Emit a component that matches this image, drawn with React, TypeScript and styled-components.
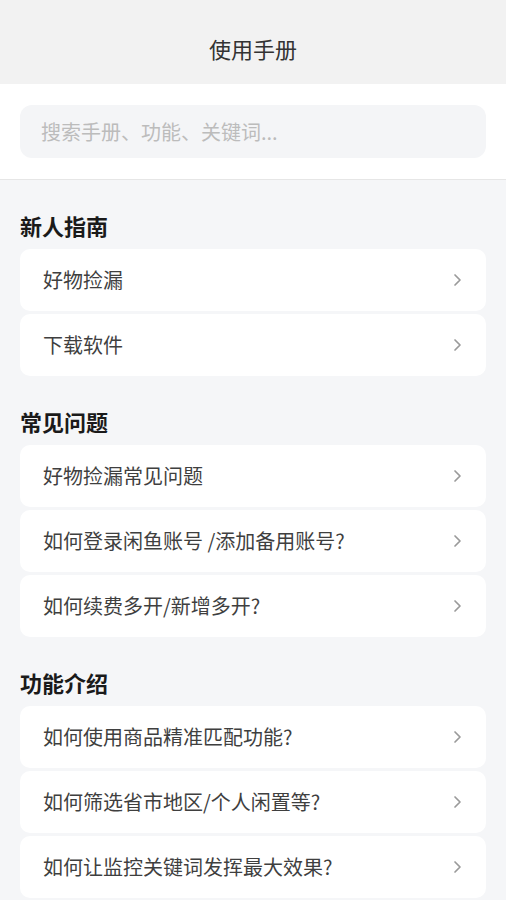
import React from 'react';
import styled, { createGlobalStyle } from 'styled-components';

const GlobalStyle = createGlobalStyle`
  html, body {
    margin: 0;
    padding: 0;
    background: #f5f6f8;
    font-family: "Noto Sans CJK SC", "Noto Sans", sans-serif;
  }
`;

const Page = styled.div`
  width: 506px;
  min-height: 900px;
  background: #f5f6f8;
`;

const Header = styled.div`
  height: 84px;
  background: #f2f2f2;
  display: flex;
  align-items: center;
  justify-content: center;
  padding-top: 12px;
  box-sizing: border-box;
  font-size: 22px;
  line-height: 28px;
  color: #333;
`;

const SearchBar = styled.div`
  background: #fff;
  padding: 21px 20px;
  border-bottom: 1px solid #e6e6e6;
`;

const SearchBox = styled.div`
  height: 53px;
  border-radius: 12px;
  background: #f4f5f7;
  display: flex;
  align-items: center;
  padding: 0 21px;
  font-size: 20px;
  color: #bcbcbc;
`;

const Section = styled.div`
  padding: 0 20px;
`;

const SectionTitle = styled.div`
  padding-top: 31.5px;
  height: 26px;
  line-height: 26px;
  margin-bottom: 11px;
  font-size: 22px;
  font-weight: 700;
  color: #1a1a1a;
`;

const List = styled.div`
  display: flex;
  flex-direction: column;
  gap: 2.5px;
`;

const Item = styled.div`
  height: 62.5px;
  background: #fff;
  border-radius: 10px;
  display: flex;
  align-items: center;
  justify-content: space-between;
  padding: 0 24px 0 23px;
  font-size: 20px;
  color: #3f3f3f;
`;

const Chevron = () => (
  <svg width="9" height="14" viewBox="0 0 9 14">
    <path d="M2 2 L7 7 L2 12" fill="none" stroke="#9a9a9a" strokeWidth="1.7" strokeLinecap="round" strokeLinejoin="round" />
  </svg>
);

const sections = [
  { title: '新人指南', items: ['好物捡漏', '下载软件'] },
  { title: '常见问题', items: ['好物捡漏常见问题', '如何登录闲鱼账号 /添加备用账号?', '如何续费多开/新增多开?'] },
  { title: '功能介绍', items: ['如何使用商品精准匹配功能?', '如何筛选省市地区/个人闲置等?', '如何让监控关键词发挥最大效果?'] },
];

const App = () => (
  <Page>
    <GlobalStyle />
    <Header>使用手册</Header>
    <SearchBar>
      <SearchBox>搜索手册、功能、关键词...</SearchBox>
    </SearchBar>
    {sections.map(s => (
      <Section key={s.title}>
        <SectionTitle>{s.title}</SectionTitle>
        <List>
          {s.items.map(i => (
            <Item key={i}>
              <span>{i}</span>
              <Chevron />
            </Item>
          ))}
        </List>
      </Section>
    ))}
  </Page>
);

export default App;
